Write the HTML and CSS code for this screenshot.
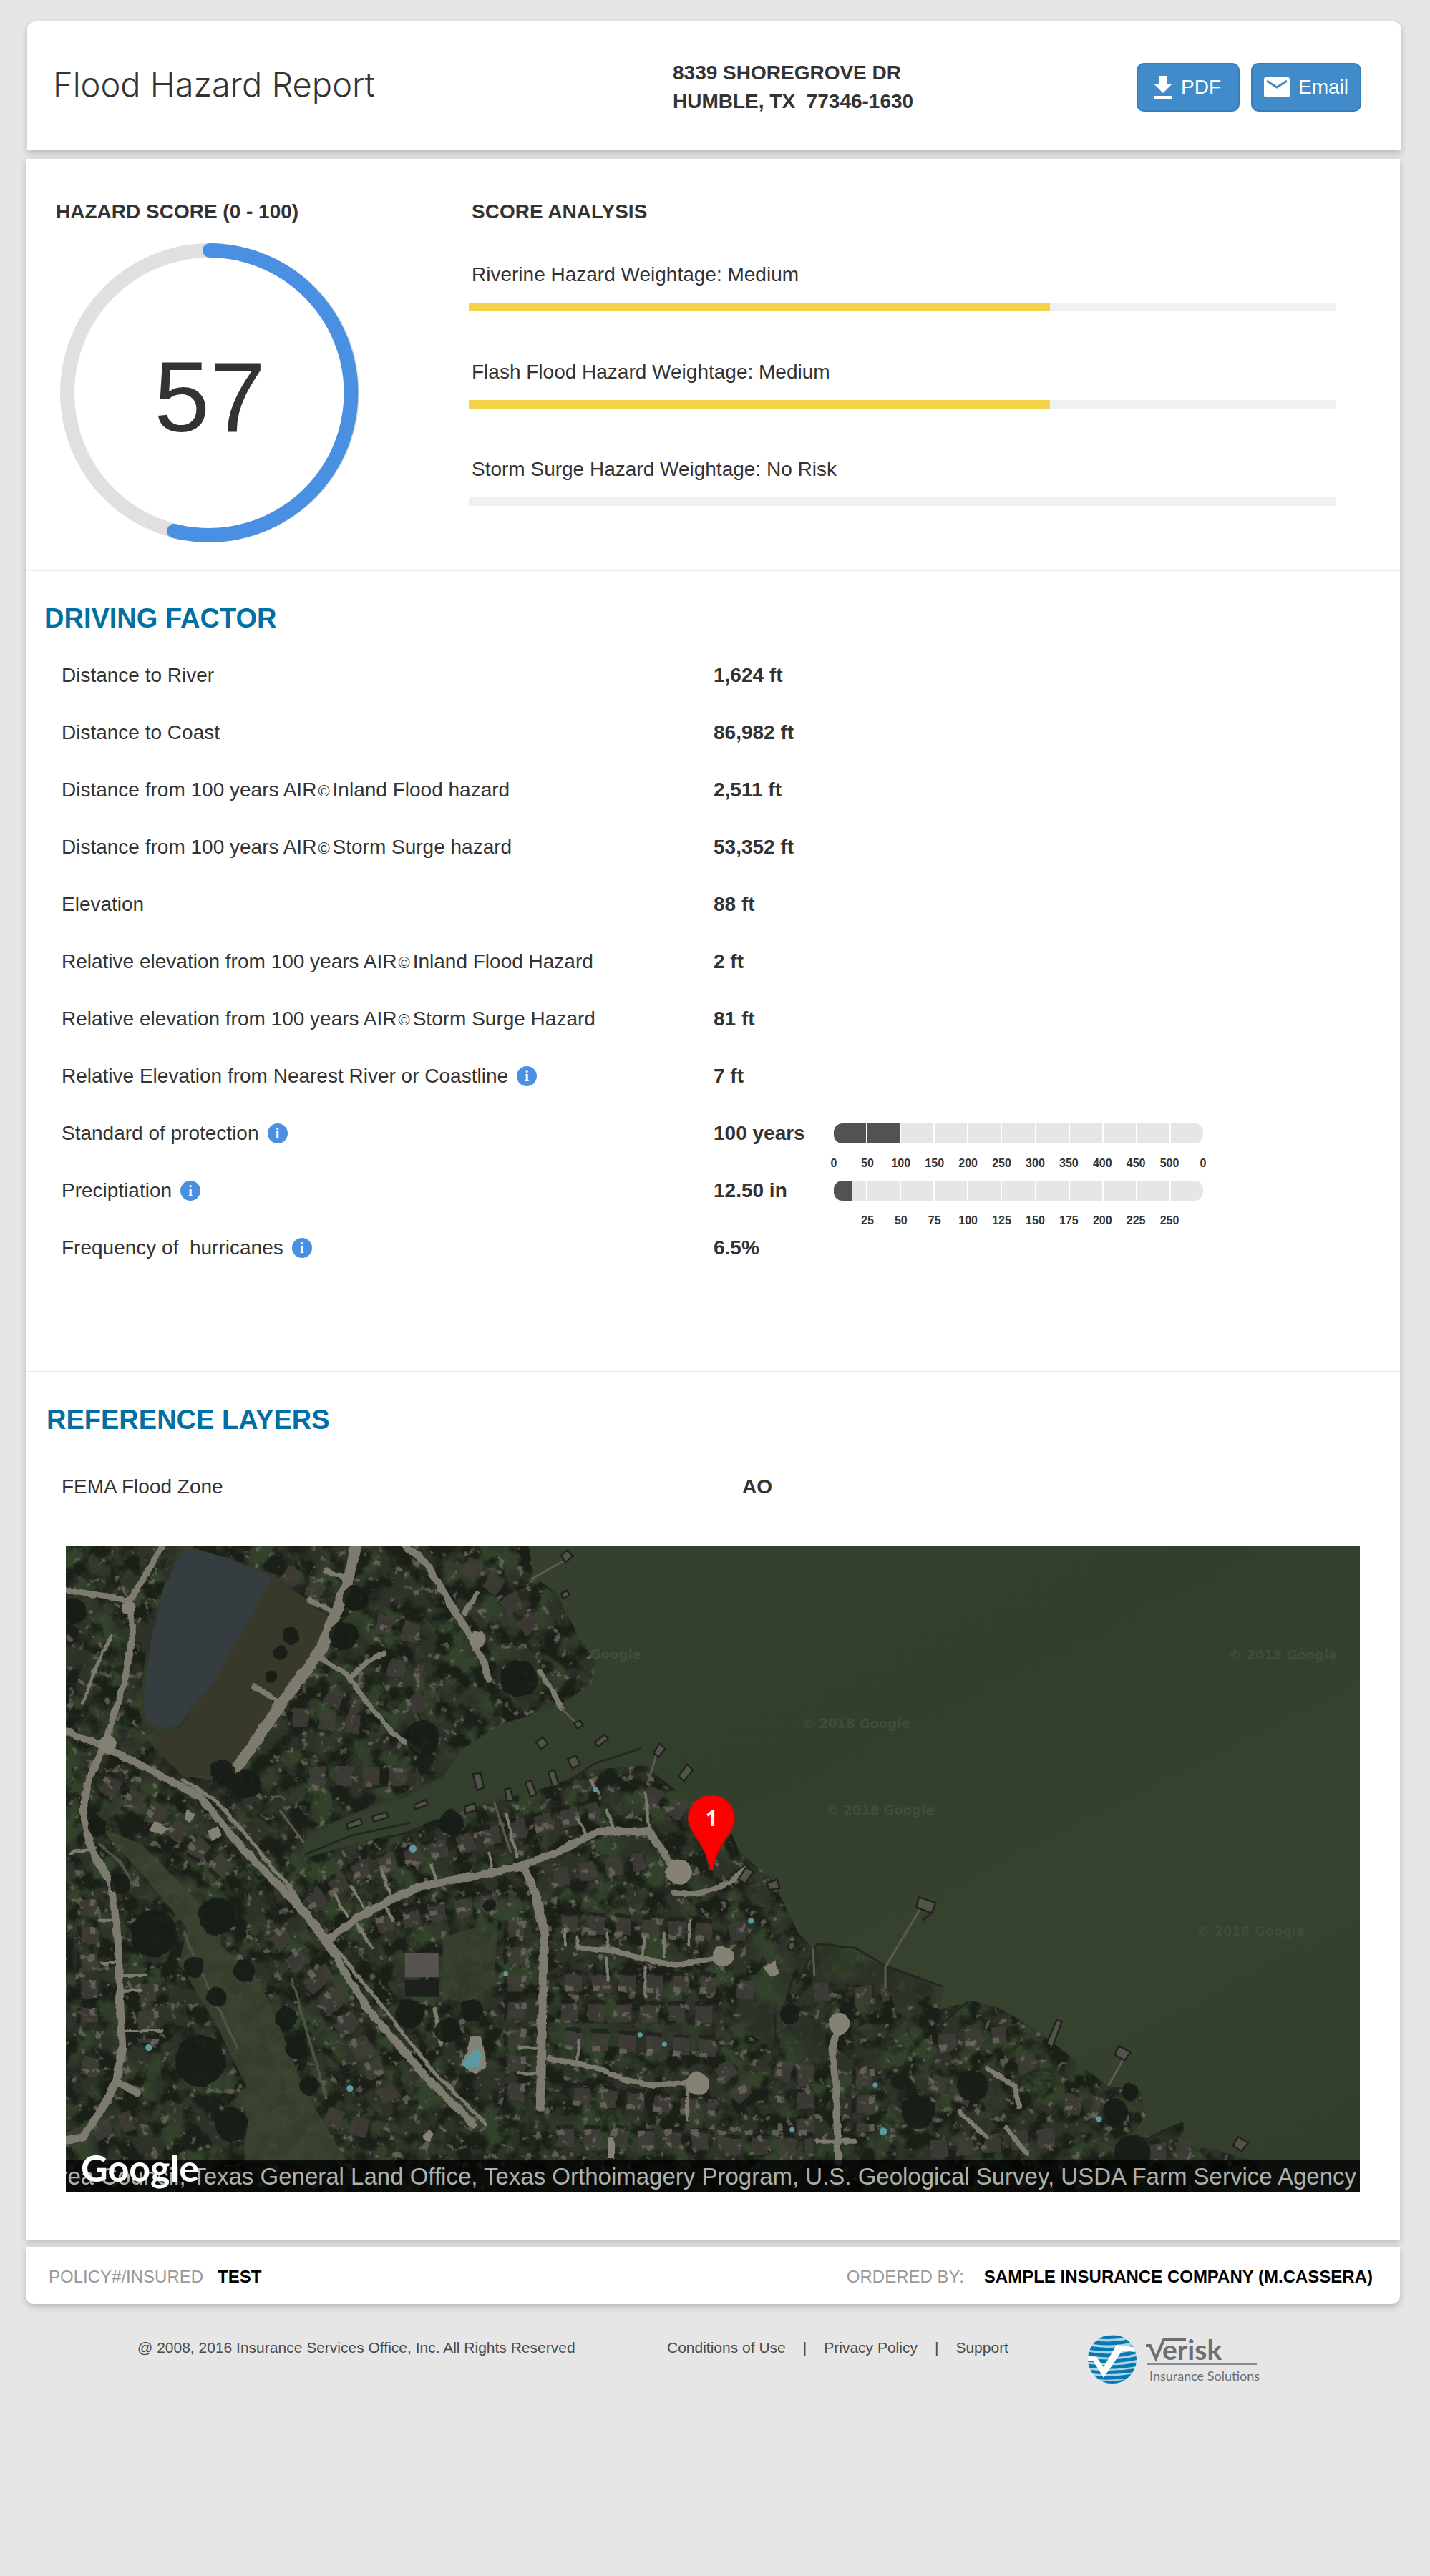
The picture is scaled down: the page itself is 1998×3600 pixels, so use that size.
FILE: index.html
```html
<!DOCTYPE html>
<html lang="en">
<head>
<meta charset="utf-8">
<meta name="viewport" content="width=device-width, initial-scale=1">
<title>Flood Hazard Report</title>
<link rel="stylesheet" href="styles.css">
</head>
<body>
<div class="page">
  <header class="report-header">
    <h1 class="report-title">Flood Hazard Report</h1>
    <address class="address">8339 SHOREGROVE DR<br>HUMBLE, TX&nbsp; 77346-1630</address>
    <div class="actions">
      <button type="button" class="btn btn-pdf">
        <svg class="icon" width="26" height="32" viewBox="0 0 26 32" aria-hidden="true"><path d="M8 0h10v11h8L13 24 0 11h8zM0 28h26v4H0z" fill="currentColor"/></svg>
        PDF
      </button>
      <button type="button" class="btn btn-email">
        <svg class="icon" width="36" height="28" viewBox="0 0 36 28" aria-hidden="true"><rect width="36" height="28" rx="3" fill="currentColor"/><path d="M4 5l14 9 14-9" fill="none" stroke="#428bca" stroke-width="3"/></svg>
        Email
      </button>
    </div>
  </header>

  <main class="report">
    <section class="score">
      <div class="score-total">
        <h2 class="label-heading">HAZARD SCORE (0 - 100)</h2>
        <div class="dial">
          <svg class="dial-ring" viewBox="0 0 418 418" aria-hidden="true">
            <circle cx="209" cy="209" r="199" fill="none" stroke="#e0e0e0" stroke-width="20"/>
            <path d="M209 10A199 199 0 1 1 159 402" fill="none" stroke="#4a90e2" stroke-width="20" stroke-linecap="round"/>
          </svg>
          <span class="dial-value">57</span>
        </div>
      </div>
      <div class="score-analysis">
        <h2 class="label-heading">SCORE ANALYSIS</h2>
        <div class="weights">
          <div class="weight"><p>Riverine Hazard Weightage: Medium</p><div class="track"><div class="fill" style="width:67%"></div></div></div>
          <div class="weight"><p>Flash Flood Hazard Weightage: Medium</p><div class="track"><div class="fill" style="width:67%"></div></div></div>
          <div class="weight"><p>Storm Surge Hazard Weightage: No Risk</p><div class="track"></div></div>
        </div>
      </div>
    </section>

    <section class="factors">
      <h2 class="section-heading">DRIVING FACTOR</h2>
      <table class="data">
        <tbody>
          <tr><th scope="row">Distance to River</th><td class="value">1,624 ft</td><td></td></tr>
          <tr><th scope="row">Distance to Coast</th><td class="value">86,982 ft</td><td></td></tr>
          <tr><th scope="row">Distance from 100 years AIR<span class="mark">©</span>Inland Flood hazard</th><td class="value">2,511 ft</td><td></td></tr>
          <tr><th scope="row">Distance from 100 years AIR<span class="mark">©</span>Storm Surge hazard</th><td class="value">53,352 ft</td><td></td></tr>
          <tr><th scope="row">Elevation</th><td class="value">88 ft</td><td></td></tr>
          <tr><th scope="row">Relative elevation from 100 years AIR<span class="mark">©</span>Inland Flood Hazard</th><td class="value">2 ft</td><td></td></tr>
          <tr><th scope="row">Relative elevation from 100 years AIR<span class="mark">©</span>Storm Surge Hazard</th><td class="value">81 ft</td><td></td></tr>
          <tr><th scope="row"><span class="with-info">Relative Elevation from Nearest River or Coastline <span class="info">i</span></span></th><td class="value">7 ft</td><td></td></tr>
          <tr><th scope="row"><span class="with-info">Standard of protection <span class="info">i</span></span></th><td class="value">100 years</td>
            <td><div class="gauge">
              <div class="cells"><i class="on"></i><i class="on"></i><i></i><i></i><i></i><i></i><i></i><i></i><i></i><i></i><i></i></div>
              <div class="ticks"><span>0</span><span>50</span><span>100</span><span>150</span><span>200</span><span>250</span><span>300</span><span>350</span><span>400</span><span>450</span><span>500</span><span>0</span></div>
            </div></td></tr>
          <tr><th scope="row"><span class="with-info">Preciptiation <span class="info">i</span></span></th><td class="value">12.50 in</td>
            <td><div class="gauge">
              <div class="cells"><i class="half"></i><i></i><i></i><i></i><i></i><i></i><i></i><i></i><i></i><i></i><i></i></div>
              <div class="ticks"><span></span><span>25</span><span>50</span><span>75</span><span>100</span><span>125</span><span>150</span><span>175</span><span>200</span><span>225</span><span>250</span><span></span></div>
            </div></td></tr>
          <tr><th scope="row"><span class="with-info">Frequency of&nbsp; hurricanes <span class="info">i</span></span></th><td class="value">6.5%</td><td></td></tr>
        </tbody>
      </table>
    </section>

    <section class="layers">
      <h2 class="section-heading">REFERENCE LAYERS</h2>
      <dl class="zone"><dt>FEMA Flood Zone</dt><dd>AO</dd></dl>
      <div class="map">
        <svg class="map-image" viewBox="0 0 1808 904" preserveAspectRatio="xMidYMid slice" role="img" aria-label="Satellite map of the property">
          <defs>
            <linearGradient id="water" x1="0" y1="0" x2="1" y2="1"><stop offset="0" stop-color="#36422e"/><stop offset=".45" stop-color="#333f2d"/><stop offset=".7" stop-color="#37432e"/><stop offset="1" stop-color="#323e2c"/></linearGradient>
            <path id="shore" d="M0 0H1120L1135 90 1190 130 1225 200 1252 250 1282 290 1275 340 1190 398 1050 440 960 500 915 565 830 610 700 650 600 700 568 758 700 722 830 690 920 655 1040 615 1170 585 1270 545 1400 535 1480 600 1600 680 1625 740 1700 800 1765 930 1800 965 1830 945 1970 1008 2112 1058 2100 1110 2180 1090 2240 1105 2320 1150 2400 1210 2500 1290 2580 1300 2592 1360 2540 1430 2680 1375 2690 1430 2760 1440 2860 1470 2880 1570H0z"/>
            <clipPath id="land"><use href="#shore"/></clipPath>
            <mask id="wooded"><rect width="3200" height="1600" fill="#fff"/>
              <g fill="#000"><path d="M290 10L520 85 650 190 560 370 420 530 370 570 300 560 210 470 195 400 215 230 255 110z"/><path d="M100 680L200 720 330 850 380 950 480 1040 530 1150 590 1300 690 1470H445L450 1290 380 1150 290 1000 310 920 210 800z" opacity=".85"/><path d="M920 940L1050 900 1040 1050 980 1100 915 1080zM1170 1140L1560 1150V1210L1170 1190z" opacity=".8"/><path d="M1180 380L920 560 600 690 570 760 1250 560z" opacity=".8"/><path d="M1800 965L1830 945 1970 1008 2112 1058 2000 1120 1980 1060 1810 1040zM1720 1150L1830 1150 1830 1210 1720 1200zM1640 1050L1740 950 1760 1000 1700 1200 1620 1150z" opacity=".8"/></g>
            </mask>
            <filter id="canopy" x="0" y="0" width="1" height="1" color-interpolation-filters="sRGB"><feTurbulence type="fractalNoise" baseFrequency=".02" numOctaves="5" seed="7"/><feColorMatrix values="0 0 0 0 .1  0 0 0 0 .12  0 0 0 0 .09  5 0 0 0 -2.2"/></filter>
            <filter id="bright" x="0" y="0" width="1" height="1" color-interpolation-filters="sRGB"><feTurbulence type="fractalNoise" baseFrequency=".045" numOctaves="4" seed="21"/><feColorMatrix values="0 0 0 0 .46  0 0 0 0 .44  0 0 0 0 .4  0 8 0 0 -5.1"/></filter>
            <filter id="grass" x="0" y="0" width="1" height="1" color-interpolation-filters="sRGB"><feTurbulence type="fractalNoise" baseFrequency=".012" numOctaves="4" seed="4"/><feColorMatrix values="0 0 0 0 .2  0 0 0 0 .26  0 0 0 0 .17  0 0 5 0 -2.2"/></filter>
            <filter id="rough" x="-.02" y="-.02" width="1.04" height="1.04"><feTurbulence type="fractalNoise" baseFrequency=".04" numOctaves="3" seed="3"/><feDisplacementMap in="SourceGraphic" scale="10" xChannelSelector="R" yChannelSelector="G"/></filter>
          </defs>
          <rect width="1808" height="904" fill="url(#water)"/>
          <g transform="translate(-12 -10) scale(.5867 .5931)">
            <g clip-path="url(#land)">
              <use href="#shore" fill="#2e3329"/>
              <rect width="3000" height="1570" filter="url(#grass)"/>
              <path d="M515 90L650 190 560 370 420 530 370 570 300 560 210 480 300 440z" fill="#38392b"/>
              <path d="M290 10L520 85 360 350 270 470 200 440 200 330z" fill="#333b28"/>
              <path d="M100 680L200 720 330 850 380 950 480 1040 530 1150 590 1300 690 1470H445L450 1290 380 1150 290 1000 310 920 210 800z" fill="#3a4230"/>
              <path d="M920 940L1050 900 1040 1050 980 1100 915 1080z" fill="#36402d"/>
              <path d="M1180 380L920 560 600 690 570 760 1250 560z" fill="#303b2a"/>
              <path d="M300 22L385 36 512 92 440 220 372 340 320 400 290 438Q240 462 208 425L206 370 225 230 258 110z" fill="#353d40"/>
            </g>
            <g clip-path="url(#land)"><g mask="url(#wooded)">
              <rect width="3000" height="1570" filter="url(#canopy)"/>
            </g></g>
            <!-- roof rows -->
            <g filter="url(#rough)" fill="none" stroke="#403d39" stroke-width="44" stroke-dasharray="40 24" opacity=".85">
              <path d="M110 575L250 660 400 780M520 930L640 1080 760 1260M600 860L720 780 1040 700 1290 640"/>
              <path d="M760 910L1000 860 1090 850M75 850V1140M215 1050V1190M1090 900V1330M1180 800L1400 760"/>
              <path d="M1200 905L1560 925M1210 1045L1570 1050M1200 1115L1560 1120M1210 1180L1570 1200M1230 1310L1570 1345M1190 1410L1590 1420"/>
              <path d="M540 80L640 140M760 200L880 230M790 300L870 320M560 420L720 440M600 560L860 560M970 60L1060 120 1150 240M1580 1240L1640 1320M1590 1430H1800M1710 1250L1790 1270M1920 1250V1400M1780 1240V1400"/>
              <path d="M1800 1070L1860 1065M1900 1080L1980 1070M1400 600L1500 650M1600 930L1660 920M1620 1060L1680 1070M2100 1190L2260 1170M2300 1220L2320 1260M2080 1280L2200 1330M2400 1330L2480 1350M2080 1440L2380 1410M2600 1450L2700 1440M60 1240L110 1250M30 1420L180 1370M620 1010L800 1330M640 1360L760 1400M840 400L900 360M640 370L720 400"/>
            </g>
            <g filter="url(#rough)" fill="none" stroke="#1b1e1a" stroke-width="10" stroke-dasharray="40 24" opacity=".7">
              <path d="M95 600L235 685 385 800M580 850L710 762 1040 675 1290 615M760 890L1000 838 1090 828M1200 882L1560 902M1210 1022L1570 1027M1200 1092L1560 1097M1210 1157L1570 1177M1230 1287L1570 1322M1190 1387L1590 1397M1590 1408H1800M1898 1250V1400M1758 1240V1400M52 850V1140M1068 900V1330"/>
            </g>
            <g filter="url(#rough)" fill="none" stroke="#65625a" stroke-width="12" stroke-dasharray="18 46" opacity=".9">
              <path d="M110 565L250 670 400 790M520 920L640 1070 760 1280M600 870L720 790 1040 710 1290 650M760 900L1000 870M85 850V1140M235 1050V1190M1110 900V1330"/>
              <path d="M1200 925L1560 945M1210 1060L1570 1065M1210 1200L1570 1220M1230 1330L1570 1355M1190 1400L1800 1400M1720 1250V1400M1940 1250V1400M2100 1200L2260 1180M2080 1290L2200 1340M2400 1340L2480 1360"/>
            </g>
            <g clip-path="url(#land)"><g mask="url(#wooded)">
              <rect width="3000" height="1570" filter="url(#bright)" opacity=".7"/>
            </g></g>
            <!-- streets -->
            <g filter="url(#rough)" fill="none" stroke="#7d7a6f" stroke-linecap="round" stroke-linejoin="round">
              <path stroke-width="27" d="M715 0L690 110 630 260 540 380 428 540"/>
              <path stroke-width="17" d="M820 10L880 60 940 160 990 240 1020 300 1025 330"/>
              <path stroke-width="12" d="M620 280L690 320 740 390 800 460 860 500M700 325L740 290 780 270M470 350L525 385M640 75L680 90M600 145L650 170M970 175L1000 130M1150 315L1180 360 1200 400"/>
              <path stroke-width="18" d="M10 450L110 490 230 550 340 610 450 740 560 850 640 950 740 1110 870 1260 990 1380"/>
              <path stroke-width="9" d="M300 570L380 620 460 710 550 820 650 950 780 1110 890 1250 1020 1380"/>
              <path stroke-width="15" d="M250 20L170 150 180 220 160 340 130 430 110 490M10 120L170 145"/>
              <path stroke-width="8" d="M130 230L90 310 60 390M30 740L90 730"/>
              <path stroke-width="18" d="M110 490L75 570 60 640 80 730 130 820 145 950 150 1100 155 1200 140 1280 110 1340 60 1410 10 1420M140 1280L190 1305"/>
              <path stroke-width="19" d="M640 950L720 890 860 820 1050 785 1110 770 1200 735 1290 690 1410 690 1450 750 1480 790"/>
              <path stroke-width="20" d="M1110 770L1140 840 1160 930 1155 1100 1150 1340"/>
              <path stroke-width="13" d="M1240 965L1320 970 1390 990 1470 1005 1590 985M1170 1225L1280 1245 1350 1275 1420 1290 1520 1280"/>
              <path stroke-width="17" d="M1865 1140L1845 1200 1855 1300 1860 1470"/>
              <path stroke-width="12" d="M2215 1250L2280 1290 2290 1340M2150 1350L2210 1410M2260 1390L2310 1450M1810 1420H1900M1470 835Q1560 850 1640 780M900 1110L915 1190"/>
              <path stroke-width="7" d="M660 840L690 890M715 910L750 965M770 780L795 840M890 770L905 810M1070 650L1095 750M1030 740L1035 780M1240 660L1260 700M1310 640L1325 685M1400 600L1410 680M1240 940V970M1310 930V970M1400 940L1390 990M1400 1010V1080M1310 990V1040M1240 1180V1240M1500 1300V1370M100 900H140M105 1000H150M155 1030H210M155 1065H200M160 1160H250M1100 1200H1150M1100 1260H1150M1270 570L1290 600M700 820L730 870M780 860L800 900M1210 920V960M1505 900V960M1445 930V985"/>
              <path stroke-width="7" stroke="#4f5244" d="M300 930L360 1060 430 1200M100 720L150 760 180 820M560 1040L600 1180 640 1320"/>
            </g>
            <g fill="#858175" filter="url(#rough)"><circle cx="1480" cy="785" r="30"/><circle cx="1585" cy="985" r="25"/><circle cx="1525" cy="1285" r="28"/><circle cx="1863" cy="1143" r="25"/><circle cx="1000" cy="240" r="20"/><circle cx="170" cy="165" r="17"/><circle cx="120" cy="485" r="22"/><path d="M360 690l20-12 10 20-22 15zM310 640l18 10-12 20-14-12zM230 665l35 18-15 14-30-10zM870 1410l15-20 12 15-12 20zM1680 1010l30-15 10 30-20 10zM985 1170l25 5 15 70-30 15-35-20 15-30zM1310 1410h18v50h-18z"/></g>
            <!-- single trees -->
            <g fill="#191d18" filter="url(#rough)" opacity=".9"><circle cx="395" cy="550" r="30"/><circle cx="555" cy="230" r="20"/><circle cx="530" cy="270" r="16"/><circle cx="510" cy="325" r="14"/><circle cx="450" cy="580" r="34"/><circle cx="95" cy="680" r="22"/><circle cx="150" cy="815" r="24"/><circle cx="445" cy="1020" r="26"/><circle cx="380" cy="890" r="44"/><circle cx="230" cy="930" r="55"/><circle cx="325" cy="1010" r="24"/><circle cx="380" cy="1080" r="24"/><circle cx="545" cy="1130" r="26"/><circle cx="570" cy="1200" r="26"/><circle cx="600" cy="1290" r="22"/><circle cx="340" cy="1230" r="60"/><circle cx="415" cy="1380" r="40"/><circle cx="940" cy="670" r="30"/><circle cx="840" cy="1120" r="34"/><circle cx="930" cy="1160" r="30"/><circle cx="985" cy="1110" r="26"/><circle cx="1030" cy="865" r="15"/><circle cx="2050" cy="1350" r="40"/><circle cx="2180" cy="1290" r="36"/><circle cx="2520" cy="1350" r="30"/><circle cx="2555" cy="1305" r="20"/><circle cx="1745" cy="1120" r="24"/><circle cx="710" cy="140" r="30"/><circle cx="680" cy="230" r="34"/><circle cx="1100" cy="330" r="44"/><circle cx="870" cy="470" r="42"/><circle cx="2560" cy="1450" r="44"/><circle cx="40" cy="170" r="30"/></g>
            <g fill="#57534f"><path d="M828 978h80v56h-80z"/><path fill="#1d201d" d="M828 1040h82v40h-82z"/></g>
            <g fill="#5b9aa0"><path d="M975 1220l25-18 12 12-8 30-30 6-8-12z"/><circle cx="847" cy="731" r="9"/><circle cx="697" cy="1296" r="8"/><circle cx="1282" cy="592" r="6"/><circle cx="1068" cy="1026" r="6"/><circle cx="1652" cy="901" r="7"/><circle cx="1967" cy="1397" r="9"/><circle cx="1948" cy="1288" r="6"/><circle cx="1750" cy="1393" r="6"/><circle cx="2481" cy="1368" r="7"/><circle cx="1388" cy="1170" r="6"/><circle cx="1446" cy="1192" r="6"/><circle cx="218" cy="1200" r="8"/></g>
            <!-- piers and boat houses -->
            <g fill="none" stroke="#22281f" stroke-width="5"><path d="M590 745L700 700 840 670M770 708L900 680M1200 585L1280 530 1390 495M1760 1050L1810 955 1900 965 1975 1008 2110 1056M2100 1150L2170 1090M1710 1120V1200M2580 1420L2682 1378M2080 885L2060 900"/></g>
            <g fill="none" stroke="#5f5b4c" stroke-width="5"><path d="M2060 865L1972 1010V1060M2540 1225L2503 1290M1130 95L1220 45M1200 400L1240 440M1800 965L1803 1030M1405 580L1430 500M1040 620L1080 740M530 640L588 718"/></g>
            <g fill="#55514b" stroke="#1e221d" stroke-width="4"><path d="M2052 845l40 14-10 24-36-14zM2528 1196l28 14-14 20-24-14zM1640 775l18 10-20 28-16-10zM1690 812l24-8 6 20-24 4zM1480 560l20-28 14 14-22 26zM1420 505l14-22 14 12-16 20zM1280 480l24-18 8 10-24 18zM1140 480l16-12 12 16-16 12zM1215 520l20-8 10 20-18 10zM990 555l18-2 8 34-16 6zM850 628l28-12 4 12-30 10zM750 655l34-10 4 12-34 10zM690 672l32-12 4 14-34 10zM970 632l24-8 4 16-26 8zM1115 575l14-4 12 32-14 6zM1170 550l14-4 10 34-14 6zM1066 592l12-4 8 28-14 4zM1200 40l14-12 14 14-18 14zM1200 130l14-8 6 12-16 8zM2380 1135l12 4-22 60-14-8zM2800 1430l12-20 24 14-16 20zM1745 950l14 4-8 18-12-6zM1230 435l16-6 6 12-14 6z"/></g>
          </g>
          <g class="watermark">
            <text x="733" y="158">Google</text><text x="1625" y="159">© 2018 Google</text><text x="1028" y="255">© 2018 Google</text><text x="1062" y="376">© 2018 Google</text><text x="1580" y="545">© 2018 Google</text>
          </g>
          <path d="M902 349a32 32 0 0 1 32 32c0 22-26 36-30 72h-4c-4-36-30-50-30-72a32 32 0 0 1 32-32z" fill="#f00" stroke="#c40d0d" stroke-width="2"/>
          <text class="pin-label" x="902" y="392">1</text>
        </svg>
        <p class="attribution">rea Council, Texas General Land Office, Texas Orthoimagery Program, U.S. Geological Survey, USDA Farm Service Agency</p>
        <span class="map-brand">Google</span>
      </div>
    </section>
  </main>

  <div class="order-bar">
    <p><span class="muted">POLICY#/INSURED</span> <strong>TEST</strong></p>
    <p class="ordered"><span class="muted">ORDERED BY:</span> <strong>SAMPLE INSURANCE COMPANY (M.CASSERA)</strong></p>
  </div>

  <footer class="site-footer">
    <p>@ 2008, 2016 Insurance Services Office, Inc. All Rights Reserved</p>
    <nav class="links"><a href="#">Conditions of Use</a><span>|</span><a href="#">Privacy Policy</a><span>|</span><a href="#">Support</a></nav>
    <svg class="logo" width="260" height="76" viewBox="0 0 260 76" role="img" aria-label="Verisk Insurance Solutions">
      <defs><clipPath id="globe"><circle cx="34" cy="35" r="34"/></clipPath></defs>
      <g clip-path="url(#globe)">
        <rect width="70" height="72" fill="#a9d3e6"/>
        <g fill="none" stroke="#0a78b0" stroke-width="5"><path d="M10 3Q34 7 58 1M4 11Q34 16 64 8M0 19Q34 25 70 16M0 27Q34 34 70 24M0 36Q34 41 70 33M0 44Q34 49 70 42M0 52Q34 56 70 50M4 60Q34 63 64 58M10 67Q34 70 58 65"/></g>
        <path d="M0 30L12 32 22 46 40 15 64 18 66 25 48 23 22 61 7 37 0 37z" fill="#fff"/>
      </g>
      <path d="M81 16H87L95 34 106 8H137" fill="none" stroke="#6d6e71" stroke-width="4"/>
      <text class="logo-name" x="104" y="36">erisk</text>
      <path d="M82 42H236" stroke="#8a8b8d" stroke-width="2"/>
      <text class="logo-tag" x="86" y="65">Insurance Solutions</text>
    </svg>
  </footer>
</div>
</body>
</html>
```
FILE: styles.css
```css
* { box-sizing: border-box; }
body {
  margin: 0;
  background: #e6e6e6;
  color: #333;
  font: 28px/40px "Liberation Sans", Arial, sans-serif;
}
h1, h2, p, dl, dd { margin: 0; }
.page { padding: 30px 42px 40px 36px; }

/* Header card */
.report-header {
  display: grid;
  grid-template-columns: minmax(0, 866px) 1fr auto;
  align-items: center;
  min-height: 180px;
  margin: 0 -2px 12px 2px;
  padding: 4px 56px 0 36px;
  background: #fff;
  border-radius: 12px 12px 0 0;
  box-shadow: 0 4px 10px rgba(0, 0, 0, .2);
}
.report-title { padding-bottom: 8px; font: 300 47px/56px Inter, "Liberation Sans", sans-serif; }
.address { font-style: normal; font-weight: 700; }
.actions { display: flex; gap: 16px; }
.btn {
  display: flex;
  align-items: center;
  height: 68px;
  border: 2px solid #357ebd;
  border-radius: 10px;
  background: #428bca;
  color: #fff;
  font: 28px/40px "Liberation Sans", Arial, sans-serif;
  cursor: pointer;
}
.btn-pdf { gap: 12px; padding: 0 24px 0 22px; }
.btn-email { gap: 12px; padding: 0 16px; }

/* Report card */
.report { background: #fff; box-shadow: 0 4px 10px rgba(0, 0, 0, .2); }
.score {
  display: grid;
  grid-template-columns: 577px 1fr;
  padding: 54px 89px 38px 42px;
}
.label-heading { font-size: 28px; line-height: 40px; }
.dial { display: grid; width: 418px; margin: 24px 0 0 6px; }
.dial-ring, .dial-value { grid-area: 1 / 1; }
.dial-value { place-self: center; font-size: 140px; line-height: 160px; padding-top: 12px; }
.score-analysis p, .score-analysis h2 { padding-left: 4px; }
.weights { display: grid; gap: 65px; margin-top: 48px; }
.track { height: 12px; margin-top: 19px; background: #f0f0f0; }
.fill { height: 100%; background: #f3d34a; }

.factors, .layers { border-top: 2px solid #ececec; }
.section-heading { color: #006fa3; font-size: 38px; line-height: 48px; }
.factors { padding: 42px 24px 132px 26px; }
.data { width: 100%; margin-top: 16px; border-collapse: collapse; table-layout: fixed; }
.data th, .data td { height: 80px; padding: 0; text-align: left; font-weight: 400; }
.data th { width: 50%; padding-left: 24px; }
.data th + td { width: 168px; }
.data .value { font-weight: 700; }
.mark { margin: 0 4px 0 2px; font-size: 22px; line-height: 20px; }
.with-info { display: flex; align-items: center; gap: 12px; }
.info {
  width: 28px;
  height: 28px;
  border-radius: 50%;
  background: #4a90e2;
  color: #fff;
  font: 700 20px/28px "Liberation Serif", serif;
  text-align: center;
}
.gauge { width: 516px; height: 28px; }
.cells { display: flex; gap: 2px; height: 28px; overflow: hidden; border-radius: 12px; }
.cells i { flex: 1; background: #e6e6e6; }
.cells .on { background: #525252; }
.cells .half { background: linear-gradient(90deg, #525252 26px, #e6e6e6 26px); }
.ticks {
  display: flex;
  justify-content: space-between;
  margin: 18px -20px 0;
  font-size: 16px;
  line-height: 20px;
  font-weight: 700;
}
.ticks span { width: 40px; text-align: center; }

/* Reference layers */
.layers { padding: 42px 56px 66px; }
.layers .section-heading { margin-left: -27px; }
.zone { display: flex; align-items: center; min-height: 80px; margin: 30px 0 42px -6px; }
.zone dt { width: 951px; }
.zone dd { font-weight: 700; }
.map { position: relative; aspect-ratio: 2 / 1; overflow: hidden; background: #343f2d; }
.map-image { display: block; width: 100%; height: 100%; }
.watermark { font: 700 18px "DejaVu Sans", sans-serif; fill: #414c3a; }
.pin-label { font: 700 30px "Open Sans", sans-serif; fill: #fff; text-anchor: middle; }
.attribution {
  position: absolute;
  inset: auto 0 0 0;
  display: flex;
  justify-content: flex-end;
  padding-right: 5px;
  background: rgba(0, 0, 0, .75);
  color: #aeb0ad;
  font-size: 33px;
  line-height: 45px;
  white-space: nowrap;
}
.map-brand {
  position: absolute;
  left: 21px;
  bottom: 5px;
  color: #fff;
  font: 700 52px/60px Lato, sans-serif;
}

/* Order bar */
.order-bar {
  display: flex;
  align-items: center;
  justify-content: space-between;
  min-height: 80px;
  margin-top: 10px;
  padding: 4px 38px 0 32px;
  background: #fff;
  border-radius: 0 0 12px 12px;
  box-shadow: 0 4px 10px rgba(0, 0, 0, .2);
  font-size: 24px;
}
.order-bar p { display: flex; gap: 20px; }
.order-bar .ordered { gap: 28px; }
.order-bar strong { color: #000; }
.muted { color: #999; }

/* Footer */
.site-footer {
  display: grid;
  grid-template-columns: 740px 588px auto;
  padding: 42px 0 0 156px;
  color: #4a4a4a;
  font-size: 21px;
  line-height: 38px;
}
.links { display: flex; gap: 24px; }
.links a { color: inherit; text-decoration: none; }
.logo-name { font: 700 39px Lato, sans-serif; fill: #6d6e71; }
.logo-tag { font: 18px Lato, sans-serif; fill: #6d6e71; }
```
